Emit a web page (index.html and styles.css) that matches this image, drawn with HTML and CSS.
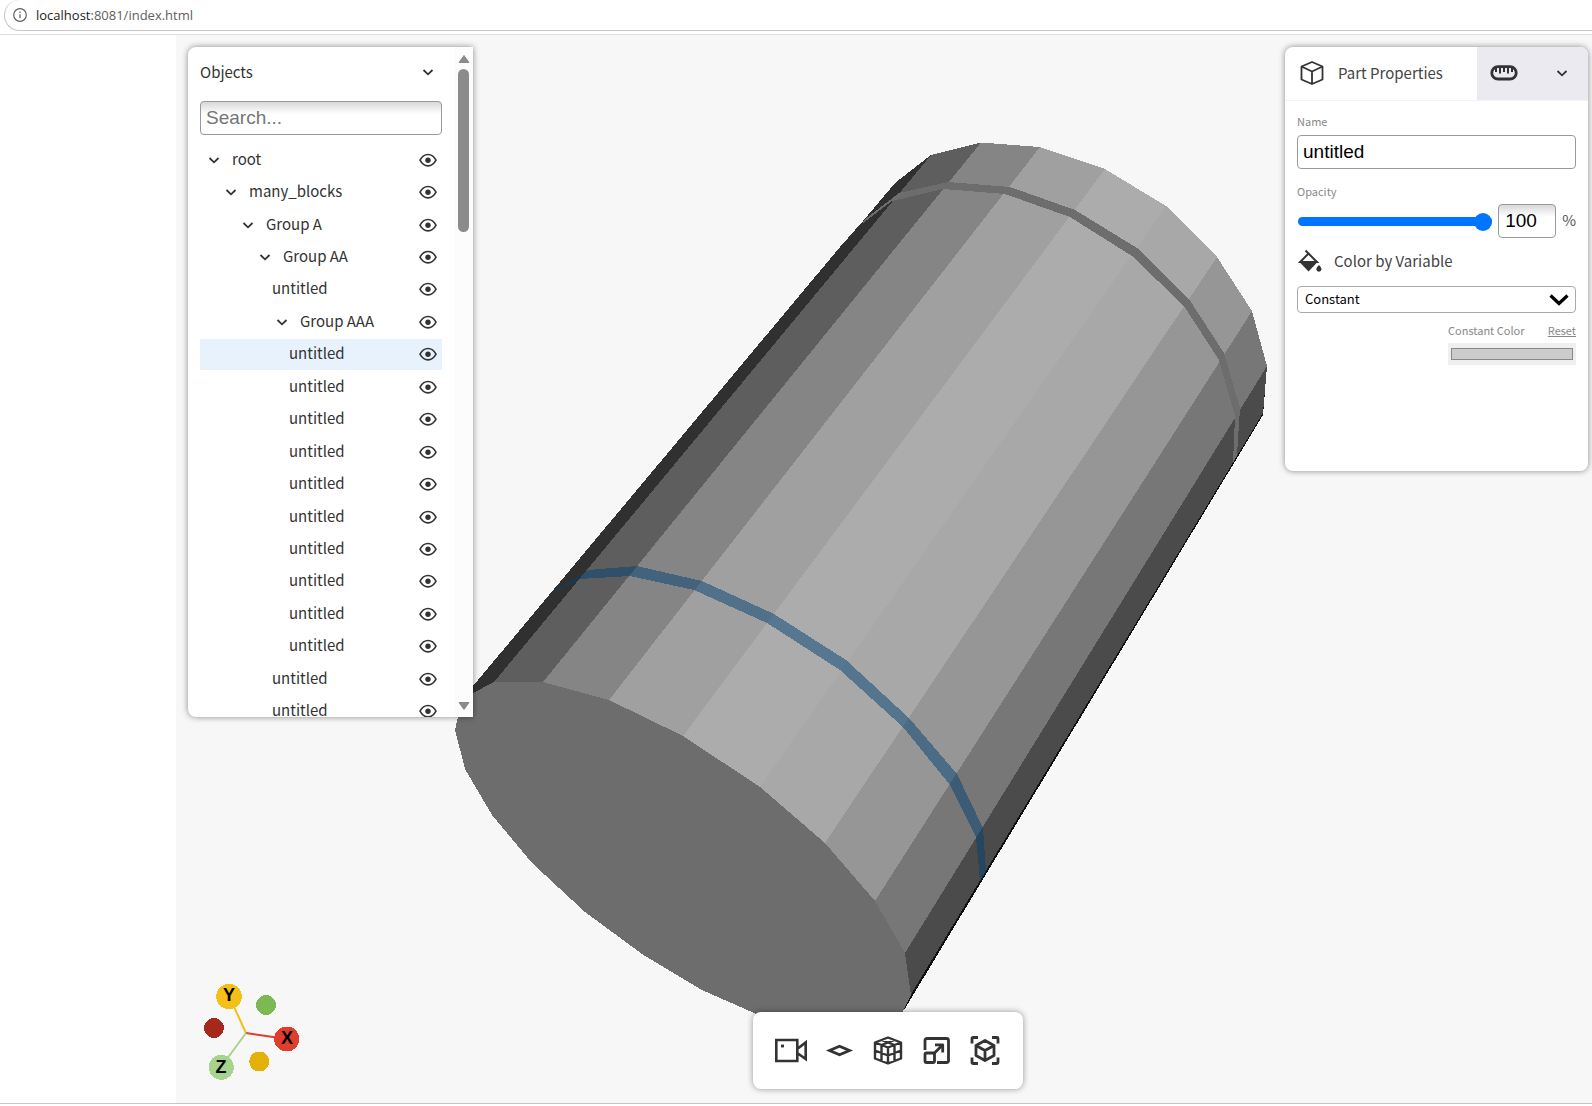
FILE: index.html
```html
<!DOCTYPE html>
<html lang="en">
<head>
<meta charset="utf-8">
<title>Model viewer</title>
<link rel="stylesheet" href="styles.css">
</head>
<body>
<svg class="defs" width="0" height="0" aria-hidden="true">
  <symbol id="chevron" viewBox="0 0 12 12"><path d="M1.500 4 6 8.300 10.500 4" fill="none" stroke="currentColor" stroke-width="1.800"/></symbol>
  <symbol id="eye" viewBox="0 0 18 14"><path d="M1 7.200C3 3.400 5.800 1.500 9 1.500S15 3.400 17 7.200c-2 3.800-4.800 5.700-8 5.700S3 11 1 7.200z" fill="none" stroke="currentColor" stroke-width="1.600"/><circle cx="9" cy="7.200" r="2.700" fill="currentColor"/></symbol>
</svg>

<header class="address-bar">
  <div class="address">
    <svg class="info-icon" viewBox="0 0 14 14"><circle cx="7" cy="7" r="6.300" fill="none" stroke="currentColor" stroke-width="1.200"/><path d="M7 6.300v4M7 3.500v1.400" stroke="currentColor" stroke-width="1.200"/></svg>
    <span>localhost<span class="address-path">:8081/index.html</span></span>
  </div>
</header>

<main class="app">
  <section class="viewport">
    <svg class="scene" viewBox="176 35 1416 1068" shape-rendering="crispEdges" role="img" aria-label="Cylinder model">
      <path fill="#111" d="M905 953 1267 366 1263 415 903.500 1011z"/>
      <path fill="#303030" d="M473 686 840 247 863 221 895 183 931 155 494 682 473 694z"/>
      <path fill="#5e5e5e" d="M494 682 931 155 981 142.500 543 682z"/>
      <path fill="#858585" d="M543 682 981 142.500 1040 147 609 700z"/>
      <path fill="#a0a0a0" d="M609 700 1040 147 1105 169 683 736z"/>
      <path fill="#acacac" d="M683 736 1105 169 1166 206 760 787z"/>
      <path fill="#a8a8a8" d="M760 787 1166 206 1217 257 825 843z"/>
      <path fill="#969696" d="M825 843 1217 257 1252 311 875 901z"/>
      <path fill="#777" d="M875 901 1252 311 1267 366 905 953z"/>
      <path fill="#4b4b4b" d="M905 953 1267 366 1263 413 910 996z"/>
      <path fill="#6d6d6d" d="M864 220 899 193 948 182 1010 187 1075 210 1137 248 1189 299 1224 353 1240 408 1237 455 1233 463 1235 416 1219 360 1184 306 1132 256 1070 217 1005 194 943 189 892 201 863 223z"/>
      <path fill="#004272" fill-opacity=".5" d="M558 590 588 570 637 566 702 581 774 614 846 660 909 718 957 774 983 828 986 872 980 882 976 837 950 785 903 727 840 670 767 623 694 590 630 576 580 579 550 596z"/>
      <path fill="#6d6d6d" d="M473 693 494 682H543L609 700 683 736 760 787 825 843 875 901 905 953 911 995 903 1011 890 1030H790L754 1013 702 990 642 954 585 912 532 863 492 815 465 769 455 730 458 717z"/>
    </svg>

    <svg class="gizmo" viewBox="200 980 104 104" role="img" aria-label="Axes">
      <path stroke="#f4bf19" stroke-width="2" d="M246 1033 229 996"/>
      <path stroke="#e03e2d" stroke-width="2" d="M246 1033 287 1039"/>
      <path stroke="#a8d38c" stroke-width="2" d="M246 1033 221 1067"/>
      <g shape-rendering="crispEdges">
        <circle cx="229" cy="996.500" r="12.700" fill="#f4bf19"/>
        <circle cx="286.700" cy="1039" r="12.500" fill="#e03e2d"/>
        <circle cx="221.300" cy="1067.300" r="12.500" fill="#a8d38c"/>
        <circle cx="266" cy="1005" r="10" fill="#7db953"/>
        <circle cx="214" cy="1028" r="10" fill="#a5281b"/>
        <circle cx="259.300" cy="1061.500" r="10" fill="#e4b10b"/>
      </g>
      <text class="axis" x="229" y="1001">Y</text>
      <text class="axis" x="287" y="1044">X</text>
      <text class="axis" x="221" y="1073">Z</text>
    </svg>

    <aside class="panel objects">
      <div class="objects-body">
        <div class="objects-head"><h2>Objects</h2><button class="icon-button" aria-label="Collapse"><svg class="chevron"><use href="#chevron"/></svg></button></div>
        <input class="field search" type="text" placeholder="Search..." aria-label="Search objects">
        <ul class="tree" id="tree">
          <li class="row level-0"><svg class="chevron"><use href="#chevron"/></svg><span>root</span><button class="icon-button" aria-label="Toggle visibility"><svg class="eye"><use href="#eye"/></svg></button></li>
          <li class="row level-1"><svg class="chevron"><use href="#chevron"/></svg><span>many_blocks</span><button class="icon-button" aria-label="Toggle visibility"><svg class="eye"><use href="#eye"/></svg></button></li>
          <li class="row level-2"><svg class="chevron"><use href="#chevron"/></svg><span>Group A</span><button class="icon-button" aria-label="Toggle visibility"><svg class="eye"><use href="#eye"/></svg></button></li>
          <li class="row level-3"><svg class="chevron"><use href="#chevron"/></svg><span>Group AA</span><button class="icon-button" aria-label="Toggle visibility"><svg class="eye"><use href="#eye"/></svg></button></li>
          <li class="row level-4"><span>untitled</span><button class="icon-button" aria-label="Toggle visibility"><svg class="eye"><use href="#eye"/></svg></button></li>
          <li class="row level-4"><svg class="chevron"><use href="#chevron"/></svg><span>Group AAA</span><button class="icon-button" aria-label="Toggle visibility"><svg class="eye"><use href="#eye"/></svg></button></li>
          <li class="row level-5 selected"><span>untitled</span><button class="icon-button" aria-label="Toggle visibility"><svg class="eye"><use href="#eye"/></svg></button></li>
          <li class="row level-5"><span>untitled</span><button class="icon-button" aria-label="Toggle visibility"><svg class="eye"><use href="#eye"/></svg></button></li>
          <li class="row level-5"><span>untitled</span><button class="icon-button" aria-label="Toggle visibility"><svg class="eye"><use href="#eye"/></svg></button></li>
          <li class="row level-5"><span>untitled</span><button class="icon-button" aria-label="Toggle visibility"><svg class="eye"><use href="#eye"/></svg></button></li>
          <li class="row level-5"><span>untitled</span><button class="icon-button" aria-label="Toggle visibility"><svg class="eye"><use href="#eye"/></svg></button></li>
          <li class="row level-5"><span>untitled</span><button class="icon-button" aria-label="Toggle visibility"><svg class="eye"><use href="#eye"/></svg></button></li>
          <li class="row level-5"><span>untitled</span><button class="icon-button" aria-label="Toggle visibility"><svg class="eye"><use href="#eye"/></svg></button></li>
          <li class="row level-5"><span>untitled</span><button class="icon-button" aria-label="Toggle visibility"><svg class="eye"><use href="#eye"/></svg></button></li>
          <li class="row level-5"><span>untitled</span><button class="icon-button" aria-label="Toggle visibility"><svg class="eye"><use href="#eye"/></svg></button></li>
          <li class="row level-5"><span>untitled</span><button class="icon-button" aria-label="Toggle visibility"><svg class="eye"><use href="#eye"/></svg></button></li>
          <li class="row level-4"><span>untitled</span><button class="icon-button" aria-label="Toggle visibility"><svg class="eye"><use href="#eye"/></svg></button></li>
          <li class="row level-4"><span>untitled</span><button class="icon-button" aria-label="Toggle visibility"><svg class="eye"><use href="#eye"/></svg></button></li>
        </ul>
      </div>
      <div class="scrollbar" aria-hidden="true">
        <svg class="arrow" viewBox="0 0 12 8"><path d="M6 .5 11 7.500H1z" fill="#8b8b8b" stroke="#8b8b8b" stroke-linejoin="round"/></svg>
        <div class="thumb"></div>
        <svg class="arrow" viewBox="0 0 12 8"><path d="M6 7.500 11 .5H1z" fill="#8b8b8b" stroke="#8b8b8b" stroke-linejoin="round"/></svg>
      </div>
    </aside>

    <aside class="panel properties">
      <div class="tabs">
        <button class="tab active">
          <svg class="tab-icon" viewBox="0 0 24 24" fill="none" stroke="currentColor" stroke-width="1.800" stroke-linejoin="round"><path d="M12 1 22.500 5.500V18.500L12 23 1.500 18.500V5.500zM1.500 5.500 12 10.500 22.500 5.500M12 10.500V23"/></svg>
          <span>Part Properties</span>
        </button>
        <button class="tab measure" aria-label="Measure">
          <svg class="ruler" viewBox="0 0 28 16" fill="none" stroke="currentColor"><rect x="1.800" y="1.700" width="24.400" height="12.300" rx="6.100" stroke-width="2.800"/><path stroke-width="2" d="M6 2v5M10 2v6.500M14 2v5M18 2v6.500M22 2v5"/></svg>
        </button>
        <button class="tab more" aria-label="More"><svg class="chevron"><use href="#chevron"/></svg></button>
      </div>
      <form class="form">
        <label class="caption" for="name">Name</label>
        <input class="field" id="name" type="text" value="untitled">
        <label class="caption opacity-caption" for="opacity">Opacity</label>
        <div class="opacity">
          <input class="slider" id="opacity" type="range" min="0" max="100" value="100">
          <input class="field number" type="text" value="100" aria-label="Opacity percent">
          <span>%</span>
        </div>
        <label class="color-by" for="variable">
          <svg class="bucket" viewBox="0 0 24 24"><path d="M7.500 1.500 10.500 4.500 2.200 13H19L10.500 4.500" fill="none" stroke="currentColor" stroke-width="2"/><path d="M1 12.500h19L10.500 22.500z" fill="currentColor"/><path d="M21 16c1.600 1.800 2.400 2.800 2.400 4.200a2.500 2.500 0 0 1-5 0c0-1.400.8-2.400 2.600-4.200z" fill="currentColor"/></svg>
          Color by Variable
        </label>
        <div class="select-wrap">
          <select class="select" id="variable"><option>Constant</option></select>
          <svg class="select-arrow" viewBox="0 0 20 12"><path d="M1.500 1.500 10 9.500 18.500 1.500" fill="none" stroke="#000" stroke-width="3.200"/></svg>
        </div>
        <div class="constant">
          <div class="constant-head"><label class="caption" for="color">Constant Color</label><a class="caption" href="#reset">Reset</a></div>
          <input class="swatch" id="color" type="color" value="#cccccc">
        </div>
      </form>
    </aside>

    <nav class="toolbar">
      <button class="icon-button" aria-label="Camera"><svg class="tool" viewBox="0 0 32 32" fill="none" stroke="currentColor" stroke-width="2.600"><path d="M1.300 5h21v21h-21zM22.200 14 30.700 7.500v16.500L22.200 18"/><path d="M6 11h3" stroke-width="2.800"/></svg></button>
      <button class="icon-button" aria-label="Plane"><svg class="tool" viewBox="0 0 32 32" fill="none" stroke="currentColor" stroke-width="2.800"><path d="M5.500 15.500 15.500 11.300 25.500 15.500 15.500 19.700z"/></svg></button>
      <button class="icon-button" aria-label="Mesh"><svg class="tool" viewBox="0 0 32 32" fill="none" stroke="currentColor" stroke-width="2.400" stroke-linejoin="round"><path d="M16 2.500 29 7.500V23.500L16 28.500 3 23.500V7.500zM3 7.500 16 12.500 29 7.500M16 12.500v16M3 15.500 16 20.500 29 15.500M9.500 10v16M22.500 10v16M9.500 5 22.500 10M22.500 5 9.500 10"/></svg></button>
      <button class="icon-button" aria-label="Scale"><svg class="tool" viewBox="0 0 32 32" fill="none" stroke="currentColor" stroke-width="2.800" stroke-linejoin="round"><path d="M4 15V5.500a2 2 0 0 1 2-2H25.500a2 2 0 0 1 2 2v20a2 2 0 0 1-2 2H16"/><rect x="4" y="18" width="9.500" height="9.500" rx="1.500"/><path d="M13 18.500 21.500 10M14 9.800h7.700v7.700"/></svg></button>
      <button class="icon-button" aria-label="Fit view"><svg class="tool" viewBox="0 0 32 32" fill="none" stroke="currentColor" stroke-width="2.800" stroke-linejoin="round"><path d="M3 8.500V3.500a1 1 0 0 1 1-1h5M23 2.500h5a1 1 0 0 1 1 1v5M29 22.500v5a1 1 0 0 1-1 1h-5M9 28.500H4a1 1 0 0 1-1-1v-5M16 5.500 25 10.500V20.500L16 25.500 7 20.500V10.500zM7 10.500 16 15.500 25 10.500M16 15.500v10"/></svg></button>
    </nav>
  </section>
</main>
</body>
</html>
```
FILE: styles.css
```css
* { box-sizing: border-box; }

body {
  margin: 0;
  min-height: 100vh;
  display: flex;
  flex-direction: column;
  background: #fff;
  color: #333;
  font: 15px/24px "Noto Sans CJK SC", sans-serif;
}

.defs { position: absolute; }

button {
  margin: 0;
  padding: 0;
  border: 0;
  background: none;
  color: inherit;
  font: inherit;
}

/* Address bar */
.address-bar {
  height: 35px;
  padding-left: 4px;
  border-bottom: 1px solid #dedede;
}

.address {
  height: 31px;
  display: flex;
  align-items: center;
  gap: 9px;
  padding-left: 8px;
  border: 1px solid #c6c6c6;
  border-width: 0 0 1px 1px;
  border-radius: 16px 0 0 16px;
  font: 13px/20px "Open Sans", sans-serif;
  color: #1c1c1c;
}

.address-path { color: #606060; }
.info-icon { width: 14px; height: 14px; color: #606060; }

/* Viewer */
.app {
  flex: 1;
  display: flex;
  padding-left: 176px;
  margin-bottom: 2px;
  border-bottom: 1px solid #c6c6c6;
}

.viewport {
  flex: 1;
  position: relative;
  display: flex;
  justify-content: space-between;
  align-items: flex-start;
  padding: 12px 4px 0 12px;
  background: #f7f7f7;
}

.scene {
  position: absolute;
  inset: 0;
  width: 100%;
  height: 100%;
}

.gizmo {
  position: absolute;
  left: 24px;
  bottom: 19px;
  width: 104px;
  height: 104px;
}

.axis {
  font: bold 18px "Liberation Sans", sans-serif;
  text-anchor: middle;
  fill: #000;
}

.panel {
  position: relative;
  background: #fff;
  border-radius: 8px;
  box-shadow: 0 0 6px rgba(0, 0, 0, .45);
}

.icon-button { display: flex; align-items: center; justify-content: center; }
.chevron { width: 12px; height: 12px; }
.eye { width: 18px; height: 14px; }

.field {
  width: 100%;
  height: 34px;
  padding: 0 5px;
  border: 1px solid #999;
  border-radius: 4px;
  background: #fff;
  color: #000;
  font: 19px "Liberation Sans", sans-serif;
}

/* Objects panel */
.objects {
  width: 285px;
  height: 670px;
  display: flex;
  overflow: hidden;
  border-radius: 8px 0 0 8px;
}

.objects-body { flex: 1; padding: 0 13px 0 12px; }

.objects-head {
  height: 54px;
  display: flex;
  align-items: center;
  justify-content: space-between;
  padding: 0 8px 4px 0;
}

.objects-head h2 { margin: 0; font: inherit; }

.search,
.number { background: linear-gradient(#d8d8d8, #fff 12px); }
.search { display: block; }
.search::placeholder { color: #757575; }

.tree {
  height: 583px;
  margin: 9px 0 0;
  padding: 0;
  display: grid;
  grid-auto-rows: 1fr;
  row-gap: 1px;
  list-style: none;
}

.row {
  display: flex;
  align-items: center;
  padding: 0 5px 0 4px;
}

.row > span { padding-bottom: 2px; }
.row > .chevron { margin-left: 4px; margin-right: 12px; }
.row > .icon-button { margin-left: auto; }
.level-1 { padding-left: 21px; }
.level-2 { padding-left: 38px; }
.level-3 { padding-left: 55px; }
.level-4 { padding-left: 72px; }
.level-5 { padding-left: 89px; }
.selected { background: #e8f2fd; }

.scrollbar {
  width: 18px;
  padding: 8px 4px 7px 3px;
  display: flex;
  flex-direction: column;
  align-items: center;
  background: #fcfcfc;
}

.arrow { width: 12px; height: 8px; }

.thumb {
  width: 11px;
  height: 163px;
  margin: 6px 0 auto;
  border-radius: 6px;
  background: #8b8b8b;
}

/* Properties panel */
.properties {
  width: 303px;
  height: 424px;
  overflow: hidden;
}

.tabs {
  height: 54px;
  display: flex;
  border-bottom: 1px solid #f4f4f4;
}

.tab { display: flex; align-items: center; padding-bottom: 1px; }
.tab.active { flex: 1; gap: 14px; padding-left: 15px; color: #444; }
.tab-icon { width: 24px; height: 24px; color: #333; }
.measure, .more { background: #ebeaf0; justify-content: center; }
.measure { width: 54px; }
.more { width: 57px; padding-left: 4px; }
.ruler { width: 28px; height: 16px; }

.form { padding: 10px 12px 0; }

.caption {
  display: block;
  font-size: 11px;
  line-height: 20px;
  color: #888;
}

.form .field { display: block; margin-top: 4px; }
.opacity-caption { margin-top: 12px; }

.opacity {
  display: flex;
  align-items: center;
  gap: 6px;
  color: #555;
}

.form .number { width: 58px; margin-top: 3px; padding-left: 6px; }

.slider {
  flex: 1;
  min-width: 0;
  height: 18px;
  margin: 3px 0 0 1px;
  appearance: none;
  background: none;
}

.slider::-webkit-slider-runnable-track {
  height: 9px;
  border-radius: 5px;
  background: #0075ff;
}

.slider::-webkit-slider-thumb {
  appearance: none;
  width: 18px;
  height: 18px;
  margin-top: -4px;
  border-radius: 50%;
  background: #0075ff;
}

.color-by {
  height: 48px;
  display: flex;
  align-items: center;
  gap: 12px;
  padding: 0 0 2px 1px;
  color: #444;
}

.bucket { width: 24px; height: 24px; color: #333; }

.select-wrap { display: grid; align-items: center; }

.select {
  grid-area: 1 / 1;
  height: 27px;
  padding: 0 7px 2px;
  border: 1px solid #aaa;
  border-radius: 4px;
  appearance: none;
  background: #fff;
  color: #000;
  font: 13px "Noto Sans CJK SC", sans-serif;
}

.select-arrow {
  grid-area: 1 / 1;
  justify-self: end;
  width: 20px;
  height: 12px;
  margin-right: 7px;
  pointer-events: none;
}

.constant { width: 128px; margin: 7px 0 0 auto; }
.constant-head { display: flex; justify-content: space-between; }

.swatch {
  display: block;
  width: 100%;
  height: 22px;
  margin-top: 3px;
  padding: 5px 3px;
  border: 0;
  appearance: none;
  background: #efefef;
}

.swatch::-webkit-color-swatch-wrapper { padding: 0; }
.swatch::-webkit-color-swatch { border: 1px solid #888; border-radius: 0; }

/* Toolbar */
.toolbar {
  position: absolute;
  left: 50%;
  bottom: 14px;
  margin-left: -131px;
  width: 270px;
  height: 77px;
  display: flex;
  align-items: center;
  justify-content: space-between;
  padding: 0 22px;
  border-radius: 8px;
  background: #fff;
  box-shadow: 0 0 6px rgba(0, 0, 0, .4);
}

.tool { width: 32px; height: 32px; }
```
